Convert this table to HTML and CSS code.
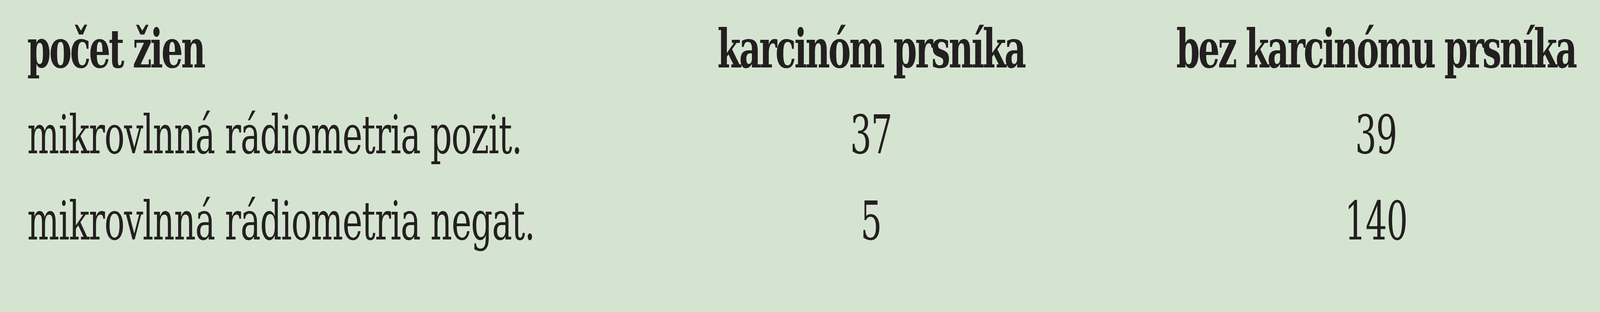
FILE: index.html
```html
<!DOCTYPE html>
<html lang="sk">
<head>
<meta charset="utf-8">
<title>Mikrovlnná rádiometria</title>
<link rel="stylesheet" href="styles.css">
</head>
<body>
<div class="frame">
  <div class="panel" id="panel">
    <div class="grid">
      <div class="cell head first">počet žien</div>
      <div class="cell head">karcinóm prsníka</div>
      <div class="cell head">bez karcinómu prsníka</div>

      <div class="cell first">mikrovlnná rádiometria pozit.</div>
      <div class="cell num">37</div>
      <div class="cell num">39</div>

      <div class="cell first">mikrovlnná rádiometria negat.</div>
      <div class="cell num">5</div>
      <div class="cell num">140</div>
    </div>
  </div>
</div>
<script src="app.js"></script>
</body>
</html>
```

FILE: styles.css
```css
:root {
  --fit: 1;
}

html, body {
  margin: 0;
  padding: 0;
  background: #d5e4d0;
  overflow: hidden;
}

.frame {
  width: 100%;
  height: 800px;
  overflow: hidden;
  background: #d5e4d0;
}

.panel {
  width: 5804px;
  height: 800px;
  box-sizing: border-box;
  padding: 15px 74px 0 99px;
  background: #d5e4d0;
  color: #231f20;
  font-family: "DejaVu Serif", serif;
  font-stretch: condensed;
  font-size: 136px;
  line-height: 221px;
  letter-spacing: -2px;
  transform: scaleX(var(--fit));
  transform-origin: 0 0;
}

.grid {
  display: grid;
  grid-template-columns: 1967px 2188px 1476px;
  grid-auto-rows: 221px;
}

.cell {
  text-align: center;
  white-space: nowrap;
}

.cell.first {
  text-align: left;
}

.head {
  font-weight: bold;
  letter-spacing: -6px;
}
```

FILE: app.js
```js
(function () {
  var w = document.documentElement.clientWidth || window.innerWidth;
  var fit = Math.min(1, (w - 0.5) / 5804);
  document.documentElement.style.setProperty('--fit', String(fit));
})();
```
